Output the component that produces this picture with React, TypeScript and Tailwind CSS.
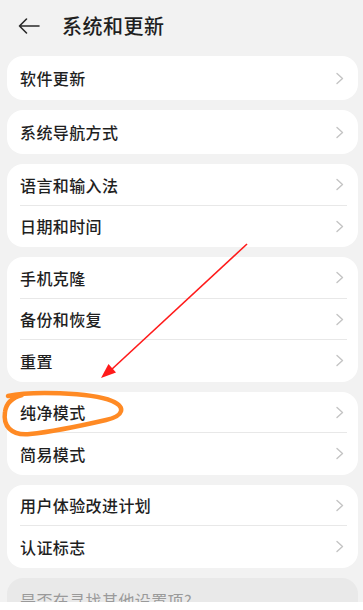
import React from "react";

const font = { fontFamily: '"Noto Sans CJK SC", "Noto Sans", sans-serif' };

function Chevron() {
  return (
    <svg width="10" height="13" viewBox="0 0 10 13" fill="none">
      <path d="M2 1.5 L7.5 6.5 L2 11.5" stroke="#c4c4c4" strokeWidth="1.4" strokeLinecap="round" strokeLinejoin="round" />
    </svg>
  );
}

function Row({ label, divider, single }: { label: string; divider?: boolean; single?: boolean }) {
  return (
    <div className={`relative flex items-center justify-between pl-[13px] pr-[13px] ${single ? "h-[44px]" : "h-[41.5px]"}`}>
      <span className="text-[16px] tracking-[0.4px] font-medium text-[#1f1f1f] leading-none">{label}</span>
      <Chevron />
      {divider && <div className="absolute left-[13px] right-[11px] bottom-0 h-px bg-[#e8e8e8]" />}
    </div>
  );
}

function Card({ items, single }: { items: string[]; single?: boolean }) {
  return (
    <div className="ml-[7px] mr-[5px] bg-white rounded-[16px] overflow-hidden">
      {items.map((it, i) => (
        <Row key={it} label={it} divider={i < items.length - 1} single={single} />
      ))}
    </div>
  );
}

export default function App() {
  return (
    <div className="relative w-[363px] h-[610px] overflow-hidden bg-white" style={font}>
      <div className="h-[602px] overflow-hidden bg-[#f2f2f2]">
        <div className="flex items-center h-[56px] pb-[4px]">
          <div className="w-[62px] flex justify-center pl-[2px]">
            <svg width="24" height="18" viewBox="0 0 24 18" fill="none" className="ml-[-6px]">
              <path d="M22 9 H2.5 M9.5 2 L2.5 9 L9.5 16" stroke="#2a2a2a" strokeWidth="1.6" strokeLinecap="round" strokeLinejoin="round" />
            </svg>
          </div>
          <span className="text-[20px] tracking-[0.5px] font-medium text-[#1f1f1f]">系统和更新</span>
        </div>
        <div className="flex flex-col gap-[10px]">
          <Card items={["软件更新"]} single />
          <Card items={["系统导航方式"]} single />
          <Card items={["语言和输入法", "日期和时间"]} />
          <Card items={["手机克隆", "备份和恢复", "重置"]} />
          <Card items={["纯净模式", "简易模式"]} />
          <Card items={["用户体验改进计划", "认证标志"]} />
          <div className="ml-[7px] mr-[5px] bg-[#e9e9e9] rounded-[16px] h-[60px] pl-[13px] pt-[10px]">
            <span className="text-[16px] tracking-[0.4px] text-[#9a9a9a] leading-none">是否在寻找其他设置项?</span>
          </div>
        </div>
      </div>
      <svg className="absolute left-0 top-0 pointer-events-none" width="363" height="610" viewBox="0 0 363 610" fill="none">
        <line x1="247" y1="244" x2="111" y2="370" stroke="#ff1a1a" strokeWidth="1.6" />
        <polygon points="101,378 108.5,364 116,372.5" fill="#ff1a1a" />
        <path
          d="M8 396 C 30 391, 90 392, 112 401 C 126 407, 124 416, 106 420 C 80 426, 50 432, 30 434 C 10 436, 3 425, 5 412 C 6 404, 11 398, 22 395"
          stroke="#ff8a24"
          strokeWidth="4.5"
          strokeLinecap="round"
          strokeLinejoin="round"
        />
      </svg>
    </div>
  );
}
